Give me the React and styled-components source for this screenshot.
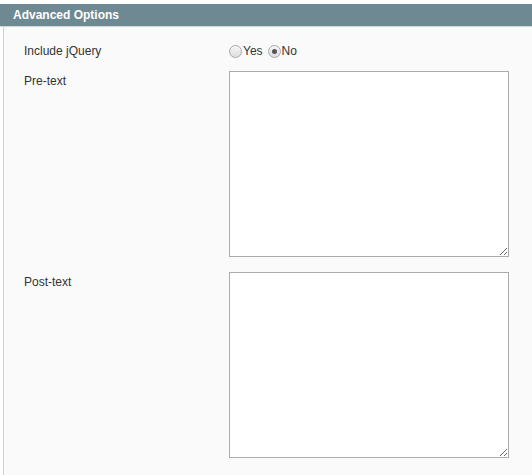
import React from 'react';
import styled, { createGlobalStyle } from 'styled-components';

const GlobalStyle = createGlobalStyle`
  html, body {
    margin: 0;
    padding: 0;
    background: #ffffff;
    font-family: 'Liberation Sans', Arial, sans-serif;
  }
`;

const Section = styled.div`
  padding-top: 4px;
  width: 532px;
`;

const Header = styled.div`
  height: 22px;
  line-height: 22px;
  padding-left: 13px;
  background: #6f8992;
  border-bottom: 1px solid #d6d6d6;
  color: #ffffff;
  font-size: 12px;
  font-weight: 700;
`;

const Fieldset = styled.div`
  margin-left: 3px;
  border-left: 1px solid #d0d0d0;
  background: #fafafa;
  padding: 15px 0 17px 20px;
  display: grid;
  grid-template-columns: 205px 280px;
  row-gap: 11px;
  height: 448px;
  box-sizing: border-box;
  align-content: start;
`;

const Label = styled.div`
  font-size: 12px;
  color: #333333;
  line-height: 18px;
  padding-top: ${(p) => p.offset || 0}px;
`;

const RadioGroup = styled.div`
  display: flex;
  align-items: center;
  height: 18px;
  font-size: 12px;
  color: #333333;
`;

const Option = styled.label`
  display: flex;
  align-items: center;
  margin-right: 5px;
`;

const Radio = styled.span`
  width: 11px;
  height: 11px;
  border: 1px solid #a9a9a9;
  border-radius: 50%;
  background: linear-gradient(#f6f6f6, #dedede);
  margin-right: 1px;
  display: inline-flex;
  align-items: center;
  justify-content: center;

  &::after {
    content: '';
    width: 5px;
    height: 5px;
    border-radius: 50%;
    background: ${(p) => (p.checked ? '#555555' : 'transparent')};
  }
`;

const TextArea = styled.textarea`
  width: 280px;
  height: 186px;
  box-sizing: border-box;
  border: 1px solid #ababab;
  background: #ffffff;
  margin: 0;
  padding: 2px;
  font-family: inherit;
  font-size: 12px;
  display: block;
`;

const Stack = styled.div`
  display: flex;
  flex-direction: column;
  gap: 15px;
  grid-column: 1 / span 2;
`;

const Row = styled.div`
  display: grid;
  grid-template-columns: 205px 280px;
`;

export default function App() {
  return (
    <>
      <GlobalStyle />
      <Section>
        <Header>Advanced Options</Header>
        <Fieldset>
          <Label>Include jQuery</Label>
          <RadioGroup>
            <Option>
              <Radio />
              Yes
            </Option>
            <Option>
              <Radio checked />
              No
            </Option>
          </RadioGroup>
          <Stack>
            <Row>
              <Label offset={1}>Pre-text</Label>
              <TextArea />
            </Row>
            <Row>
              <Label offset={1}>Post-text</Label>
              <TextArea />
            </Row>
          </Stack>
        </Fieldset>
      </Section>
    </>
  );
}
